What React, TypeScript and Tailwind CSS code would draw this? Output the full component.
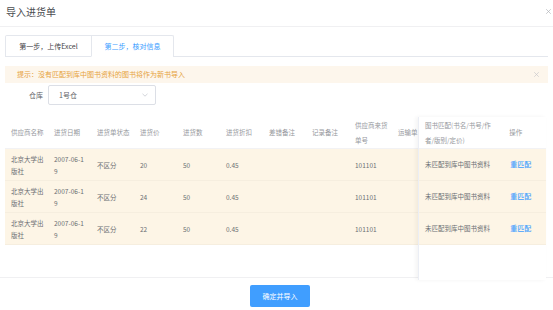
import React from "react";

const rows = [
  { price: "20" },
  { price: "24" },
  { price: "22" },
];

function XIcon({ size = 6, color = "#b0b3b8" }: { size?: number; color?: string }) {
  return (
    <svg width={size} height={size} viewBox="0 0 10 10" fill="none">
      <path d="M1 1L9 9M9 1L1 9" stroke={color} strokeWidth="1.4" strokeLinecap="round" />
    </svg>
  );
}

export default function App() {
  return (
    <div className="relative w-[553px] h-[310px] bg-white overflow-hidden antialiased font-['Noto_Sans_CJK_SC','Noto_Sans',sans-serif] text-[#6b6e73]">
      {/* header */}
      <div className="h-[27px] border-b border-[#f0f0f2] pl-[6px] pt-[6px] text-[10px] leading-[12px] text-[#4a4c50]">
        导入进货单
      </div>
      <div className="absolute right-[2px] top-[9px]">
        <XIcon size={5} />
      </div>

      {/* tabs */}
      <div className="mt-[8px] ml-[5px] mr-[5px] h-[22px] border-b border-[#e4e7ed] flex items-end">
        <div className="flex -mb-px border border-b-0 border-[#e4e7ed] rounded-t-[2px] h-[22px]">
          <div className="w-[85px] h-full flex items-center justify-center text-[7px] text-[#3f4146] border-b border-[#e4e7ed]">
            第一步，上传Excel
          </div>
          <div className="w-[82px] h-full flex items-center justify-center text-[7px] text-[#409eff] border-l border-[#e4e7ed] border-b border-b-white">
            第二步，核对信息
          </div>
        </div>
      </div>

      {/* alert */}
      <div className="mt-[9px] ml-[5px] mr-[5px] h-[17px] bg-[#fdf6ec] flex items-center justify-between pl-[12px] pr-[9px]">
        <span className="text-[7px] text-[#e6a23c] leading-none">提示：没有匹配到库中图书资料的图书将作为新书导入</span>
        <XIcon size={5} color="#c8c9cc" />
      </div>

      {/* form row */}
      <div className="mt-[2px] flex items-center h-[20px]">
        <div className="w-[44px] pr-[1px] text-right text-[7px] text-[#606266]">仓库</div>
        <div className="ml-[4px] w-[108px] h-[20px] border border-[#dcdfe6] rounded-[2px] flex items-center justify-between pl-[10px] pr-[7px]">
          <span className="text-[7px] text-[#606266]">1号仓</span>
          <svg width="6" height="4" viewBox="0 0 6 4" fill="none">
            <path d="M0.5 0.8L3 3.2L5.5 0.8" stroke="#c0c4cc" strokeWidth="0.7" />
          </svg>
        </div>
      </div>

      {/* table */}
      <div className="mt-[12px] ml-[5px] mr-[7px] h-[160px] flex text-[6.5px]">
        <div className="flex-1 overflow-hidden">
          <div className="w-[480px]">
            <div className="flex h-[32px] items-center text-[#96989d] leading-[15px] border-b border-[#f2f2f4]">
              <div className="w-[43px] pl-[6px]">供应商名称</div>
              <div className="w-[43px] pl-[6px]">进货日期</div>
              <div className="w-[43px] pl-[6px]">进货单状态</div>
              <div className="w-[43px] pl-[6px]">进货价</div>
              <div className="w-[43px] pl-[6px]">进货数</div>
              <div className="w-[43px] pl-[6px]">进货折扣</div>
              <div className="w-[43px] pl-[6px]">差错备注</div>
              <div className="w-[43px] pl-[6px]">记录备注</div>
              <div className="w-[43px] pl-[6px] whitespace-nowrap">供应商来货<br />单号</div>
              <div className="w-[60px] pl-[6px] whitespace-nowrap">运输单</div>
            </div>
            {rows.map((r, i) => (
              <div key={i} className="flex h-[32px] items-center bg-[#fdf5e6] leading-[12px] border-b border-[#f6eedf]">
                <div className="w-[43px] pl-[6px] whitespace-nowrap">北京大学出<br />版社</div>
                <div className="w-[43px] pl-[6px] whitespace-nowrap">2007-06-1<br />9</div>
                <div className="w-[43px] pl-[6px]">不区分</div>
                <div className="w-[43px] pl-[6px]">{r.price}</div>
                <div className="w-[43px] pl-[6px]">50</div>
                <div className="w-[43px] pl-[6px]">0.45</div>
                <div className="w-[43px] pl-[6px]"></div>
                <div className="w-[43px] pl-[6px]"></div>
                <div className="w-[43px] pl-[6px]">101101</div>
                <div className="w-[60px] pl-[6px]"></div>
              </div>
            ))}
          </div>
        </div>
        <div className="w-[128px] h-[163px] bg-white border-l border-[#ebeef5] shadow-[-2px_0_4px_rgba(0,0,0,0.05)]">
          <div className="flex h-[32px] items-center text-[#96989d] leading-[15px] border-b border-[#f2f2f4]">
            <div className="w-[85px] pl-[6px] whitespace-nowrap">图书匹配(书名/书号/作<br />者/版别/定价)</div>
            <div className="w-[43px] pl-[6px]">操作</div>
          </div>
          {rows.map((_, i) => (
            <div key={i} className="flex h-[32px] items-center bg-[#fdf5e6] border-b border-[#f6eedf]">
              <div className="w-[85px] pl-[6px] whitespace-nowrap">未匹配到库中图书资料</div>
              <div className="w-[43px] pl-[7px] text-[#409eff] text-[7px] font-medium">重匹配</div>
            </div>
          ))}
        </div>
      </div>

      {/* footer */}
      <div className="border-t border-[#f0f0f2] flex justify-center pt-[7px]">
        <button className="ml-[7px] w-[60px] h-[22px] bg-[#409eff] rounded-[2px] text-white text-[7px] flex items-center justify-center">
          确定并导入
        </button>
      </div>
    </div>
  );
}
